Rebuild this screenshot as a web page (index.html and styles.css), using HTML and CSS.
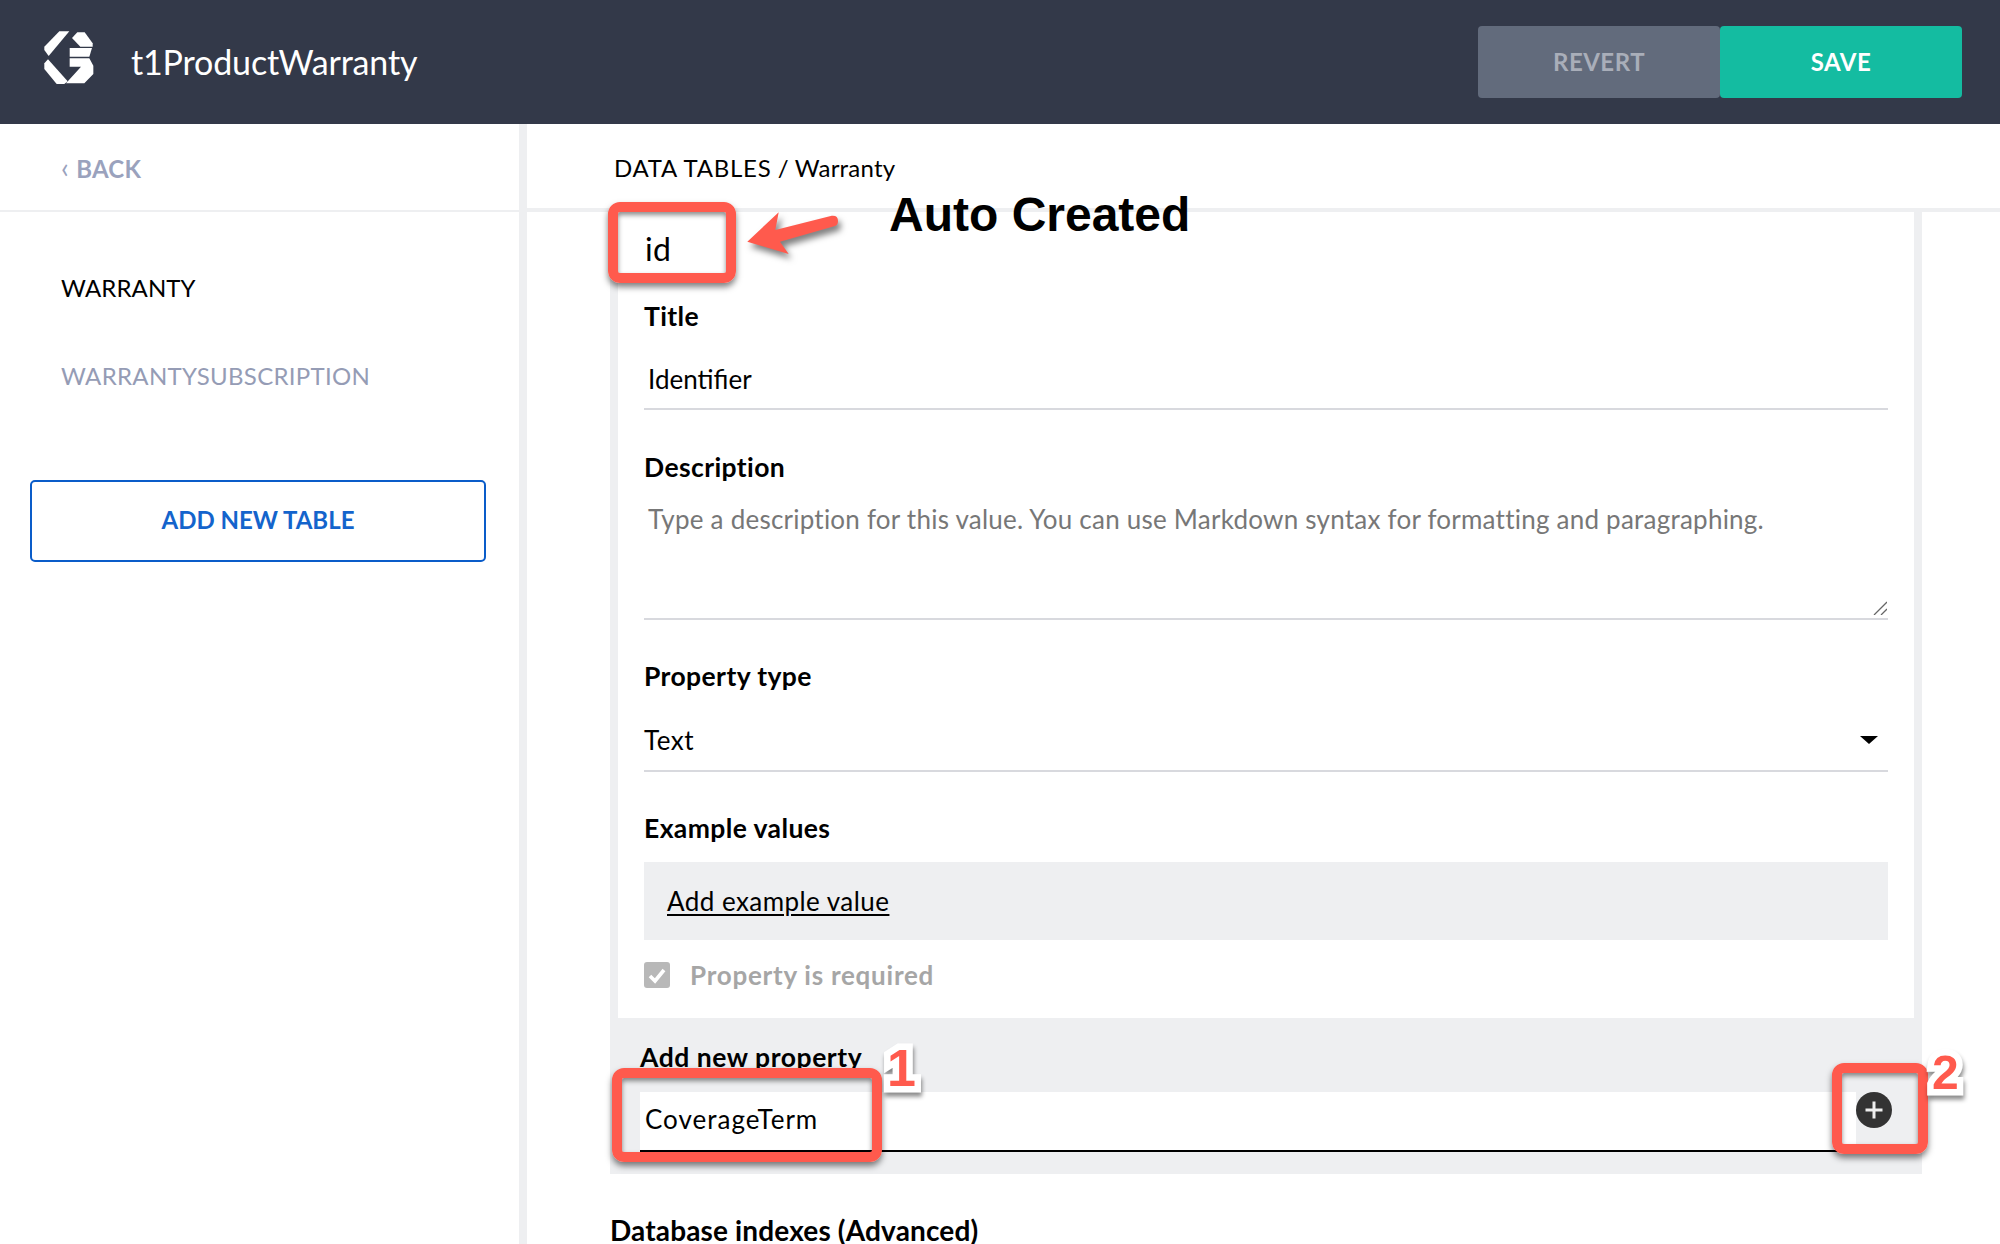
FILE: index.html
```html
<!DOCTYPE html>
<html lang="en">
<head>
  <meta charset="UTF-8">
  <title>t1ProductWarranty</title>
  <link rel="stylesheet" href="styles.css">
</head>
<body>
  <header class="topbar">
    <svg class="logo" viewBox="18 18 162 162">
      <path fill="#fff" d="M70 22 L100 22 L38 96 L25 78 L25 68 Z"/>
      <path fill="#fff" d="M25 118 L36 106 L95 172 L85 180 L62 180 L25 135 Z"/>
      <path fill="#fff" d="M108 42 L124 25 L146 25 L170 58 L170 68 L133 68 Z"/>
      <path fill="#fff" d="M101 72 L168 72 L160 98 L101 98 Z"/>
      <path fill="#fff" d="M101 103 L160 103 L172 125 L172 150 L145 178 L90 178 L135 128 L101 128 Z"/>
    </svg>
    <div class="app-name">t1ProductWarranty</div>
    <div class="actions">
      <button class="btn btn-revert">REVERT</button>
      <button class="btn btn-save">SAVE</button>
    </div>
  </header>

  <div class="layout">
    <aside class="sidebar">
      <div class="back-row"><span class="chev">&lsaquo;</span> BACK</div>
      <nav class="tables">
        <a class="table-link active">WARRANTY</a>
        <a class="table-link">WARRANTYSUBSCRIPTION</a>
      </nav>
      <button class="add-table">ADD NEW TABLE</button>
    </aside>

    <main class="main">
      <div class="crumb-row"><span class="crumb-root">DATA TABLES</span> / Warranty</div>
      <div class="scroll">
        <div class="prop-panel">
          <div class="prop-card">
            <div class="prop-name">id</div>
            <label class="label label-title">Title</label>
            <div class="field field-title">Identifier</div>
            <label class="label label-desc">Description</label>
            <div class="field field-area">
              Type a description for this value. You can use Markdown syntax for formatting and paragraphing.
              <svg class="grip" viewBox="0 0 14 14">
                <path d="M1 14 L14 1 M8 14 L14 8" stroke="#666" stroke-width="1.3" fill="none"/>
              </svg>
            </div>
            <label class="label label-type">Property type</label>
            <div class="field field-select">Text<span class="caret"></span></div>
            <label class="label label-examples">Example values</label>
            <div class="example-box"><a class="example-link">Add example value</a></div>
            <div class="required">
              <span class="checkbox">
                <svg viewBox="0 0 26 26"><path d="M6 14 L11 19 L20 8" stroke="#fff" stroke-width="3.6" fill="none"/></svg>
              </span>
              Property is required
            </div>
          </div>
          <div class="new-prop">
            <div class="new-label">Add new property</div>
            <div class="new-row">
              <div class="new-input">CoverageTerm</div>
              <div class="plus-wrap">
                <svg class="plus" viewBox="0 0 36 36">
                  <circle cx="18" cy="18" r="18" fill="#333"/>
                  <path d="M18 9.5 V26.5 M9.5 18 H26.5" stroke="#eee" stroke-width="3"/>
                </svg>
              </div>
            </div>
          </div>
        </div>
        <h2 class="db-title">Database indexes (Advanced)</h2>
      </div>
    </main>
  </div>

  <!-- annotations drawn on top of the screenshot -->
  <div class="mark mark-id"></div>
  <div class="mark mark-new"></div>
  <div class="mark mark-plus"></div>
  <svg class="arrow" viewBox="0 0 110 60">
    <path fill="#ff5a4d" d="M6.3 29.7 L37.7 .3 L34.3 18 L90.7 3.7 Q97 3 97 9 Q97 13 94 14 L39 29.7 L47.7 42 Z"/>
  </svg>
  <div class="note">Auto Created</div>
  <div class="num num-1">1</div>
  <div class="num num-2">2</div>
</body>
</html>
```

FILE: styles.css
```css
*{
  padding: 0;
  margin: 0;
  box-sizing: border-box;
}
html,body{
  height: 1244px;
  overflow: hidden;
}
body{
  position: relative;
  background: #fff;
  color: #000;
  font-family: "Lato", "Liberation Sans", sans-serif;
  font-size: 26px;
  letter-spacing: .23px;
}
button{
  font-family: inherit;
  border: 0;
}

.topbar{
  display: flex;
  align-items: center;
  height: 124px;
  padding: 0 38px 0 42px;
  background: #333949;
}
.logo{
  width: 54px;
  height: 54px;
  margin-top: -10px;
}
.app-name{
  margin: -2px 0 0 35px;
  color: #fff;
  font-size: 34px;
  letter-spacing: -.15px;
}
.actions{
  display: flex;
  margin-left: auto;
}
.btn{
  width: 242px;
  height: 72px;
  padding-bottom: 2px;
  border-radius: 4px;
  font-size: 24px;
  font-weight: 700;
  letter-spacing: .5px;
}
.btn-revert{
  background: #626b7c;
  color: #a9aeb9;
}
.btn-save{
  background: #14bca1;
  color: #fff;
}

.layout{
  display: flex;
  height: 1120px;
}
.sidebar{
  width: 527px;
  flex: none;
  border-right: 8px solid #eeeff1;
}
.back-row{
  height: 88px;
  padding: 28px 0 0 61px;
  border-bottom: 2px solid #eeeff1;
  color: #9aa2bd;
  font-size: 24px;
  font-weight: 700;
  line-height: 30px;
}
.chev{
  margin-right: 1px;
  font-size: 28px;
  font-weight: 400;
}
.tables{
  display: flex;
  flex-direction: column;
  gap: 58px;
  padding: 61px 0 0 61px;
  line-height: 30px;
}
.table-link{
  color: #959cb5;
  font-size: 24px;
  letter-spacing: .3px;
}
.table-link.active{
  color: #000;
  letter-spacing: .1px;
}
.add-table{
  display: block;
  width: 456px;
  height: 82px;
  margin: 89px 0 0 30px;
  padding-bottom: 3px;
  border: 2px solid #0a5cc9;
  border-radius: 5px;
  background: #fff;
  color: #1464cc;
  font-size: 24px;
  font-weight: 700;
}

.main{
  flex: 1;
  min-width: 0;
}
.crumb-row{
  height: 88px;
  padding: 29px 0 0 87px;
  border-bottom: 4px solid #eeeff1;
  font-size: 24px;
  letter-spacing: .2px;
  line-height: 30px;
}
.crumb-root{
  letter-spacing: .75px;
}
.scroll{
  padding-left: 83px;
  padding-right: 78px;
}
.prop-panel{
  background: #eeeff1;
}
.prop-card{
  height: 806px;
  margin: 0 8px;
  padding: 0 26px;
  background: #fff;
}
.prop-name{
  height: 74px;
  padding: 17px 0 0 1px;
  font-size: 32px;
  line-height: 40px;
}
.label{
  display: block;
  font-size: 26.5px;
  font-weight: 700;
  letter-spacing: .4px;
  line-height: 32px;
}
.label-title{
  height: 46px;
  padding-top: 14px;
}
.label-desc{
  margin-top: 41px;
}
.label-type{
  margin-top: 40px;
}
.label-examples{
  margin-top: 40px;
}
.field{
  position: relative;
  display: flex;
  align-items: center;
  height: 78px;
  padding: 16px 4px 0;
  border-bottom: 2px solid #d8d9de;
}
.field-title{
  padding-top: 18px;
  letter-spacing: 0;
}
.field-area{
  display: block;
  height: 137px;
  padding-top: 20px;
  color: #777;
  line-height: 32px;
}
.grip{
  position: absolute;
  right: 1px;
  bottom: 3px;
  width: 14px;
  height: 14px;
}
.field-select{
  justify-content: space-between;
  height: 80px;
  padding: 17px 2px 0 0;
  letter-spacing: .5px;
}
.caret{
  width: 0;
  height: 0;
  margin-right: 8px;
  border-style: solid;
  border-width: 8px 9px 0;
  border-color: #000 transparent transparent;
}
.example-box{
  display: flex;
  align-items: center;
  height: 78px;
  margin-top: 18px;
  padding-left: 23px;
  background: #eeeff1;
}
.example-link{
  letter-spacing: .45px;
  text-decoration: underline;
  text-underline-offset: 3px;
}
.required{
  display: flex;
  align-items: center;
  gap: 20px;
  height: 26px;
  margin-top: 22px;
  color: #a6a6a6;
  font-weight: 700;
  letter-spacing: .75px;
}
.checkbox{
  width: 26px;
  height: 26px;
  border-radius: 3px;
  background: #b8b8b8;
}
.checkbox svg{
  display: block;
}
.new-prop{
  height: 156px;
  padding: 0 0 22px 30px;
}
.new-label{
  height: 74px;
  padding-top: 23px;
  font-size: 26.5px;
  font-weight: 700;
  letter-spacing: .55px;
  line-height: 32px;
}
.new-row{
  display: flex;
  align-items: stretch;
}
.new-input{
  flex: 1;
  height: 60px;
  padding: 11px 0 0 5px;
  border-bottom: 2px solid #000;
  background: #fff;
  letter-spacing: 1px;
  line-height: 32px;
}
.plus-wrap{
  width: 66px;
  flex: none;
}
.plus{
  display: block;
  width: 36px;
  height: 36px;
}
.db-title{
  margin-top: 38px;
  font-size: 28px;
  font-weight: 700;
  letter-spacing: .15px;
  line-height: 36px;
}

/* annotations */
.mark{
  position: absolute;
  border: 10px solid #ff5a4d;
  border-radius: 12px;
  box-shadow: 0 4px 6px rgba(0,0,0,.5), inset 0 3px 5px rgba(0,0,0,.45);
}
.mark-id{
  left: 608px;
  top: 202px;
  width: 128px;
  height: 81px;
}
.mark-new{
  left: 612px;
  top: 1068px;
  width: 270px;
  height: 94px;
}
.mark-plus{
  left: 1832px;
  top: 1063px;
  width: 96px;
  height: 91px;
}
.arrow{
  position: absolute;
  left: 741px;
  top: 212px;
  width: 110px;
  height: 60px;
  filter: drop-shadow(3px 5px 3px rgba(0,0,0,.5));
}
.note{
  position: absolute;
  left: 889px;
  top: 187px;
  font-family: "Liberation Sans", sans-serif;
  font-size: 48px;
  font-weight: 700;
  letter-spacing: 0;
  line-height: 55px;
  white-space: nowrap;
}
.num{
  position: absolute;
  color: #ff5a4d;
  font-family: "Liberation Sans", sans-serif;
  font-weight: 700;
  letter-spacing: 0;
  -webkit-text-stroke: 13px #fff;
  stroke-linejoin: round;
  paint-order: stroke fill;
  filter: drop-shadow(1px 4px 2px rgba(0,0,0,.45));
}
.num-1{
  left: 887px;
  top: 1038px;
  font-size: 52px;
  line-height: 60px;
}
.num-2{
  left: 1932px;
  top: 1043px;
  font-size: 48px;
  line-height: 60px;
}
```
